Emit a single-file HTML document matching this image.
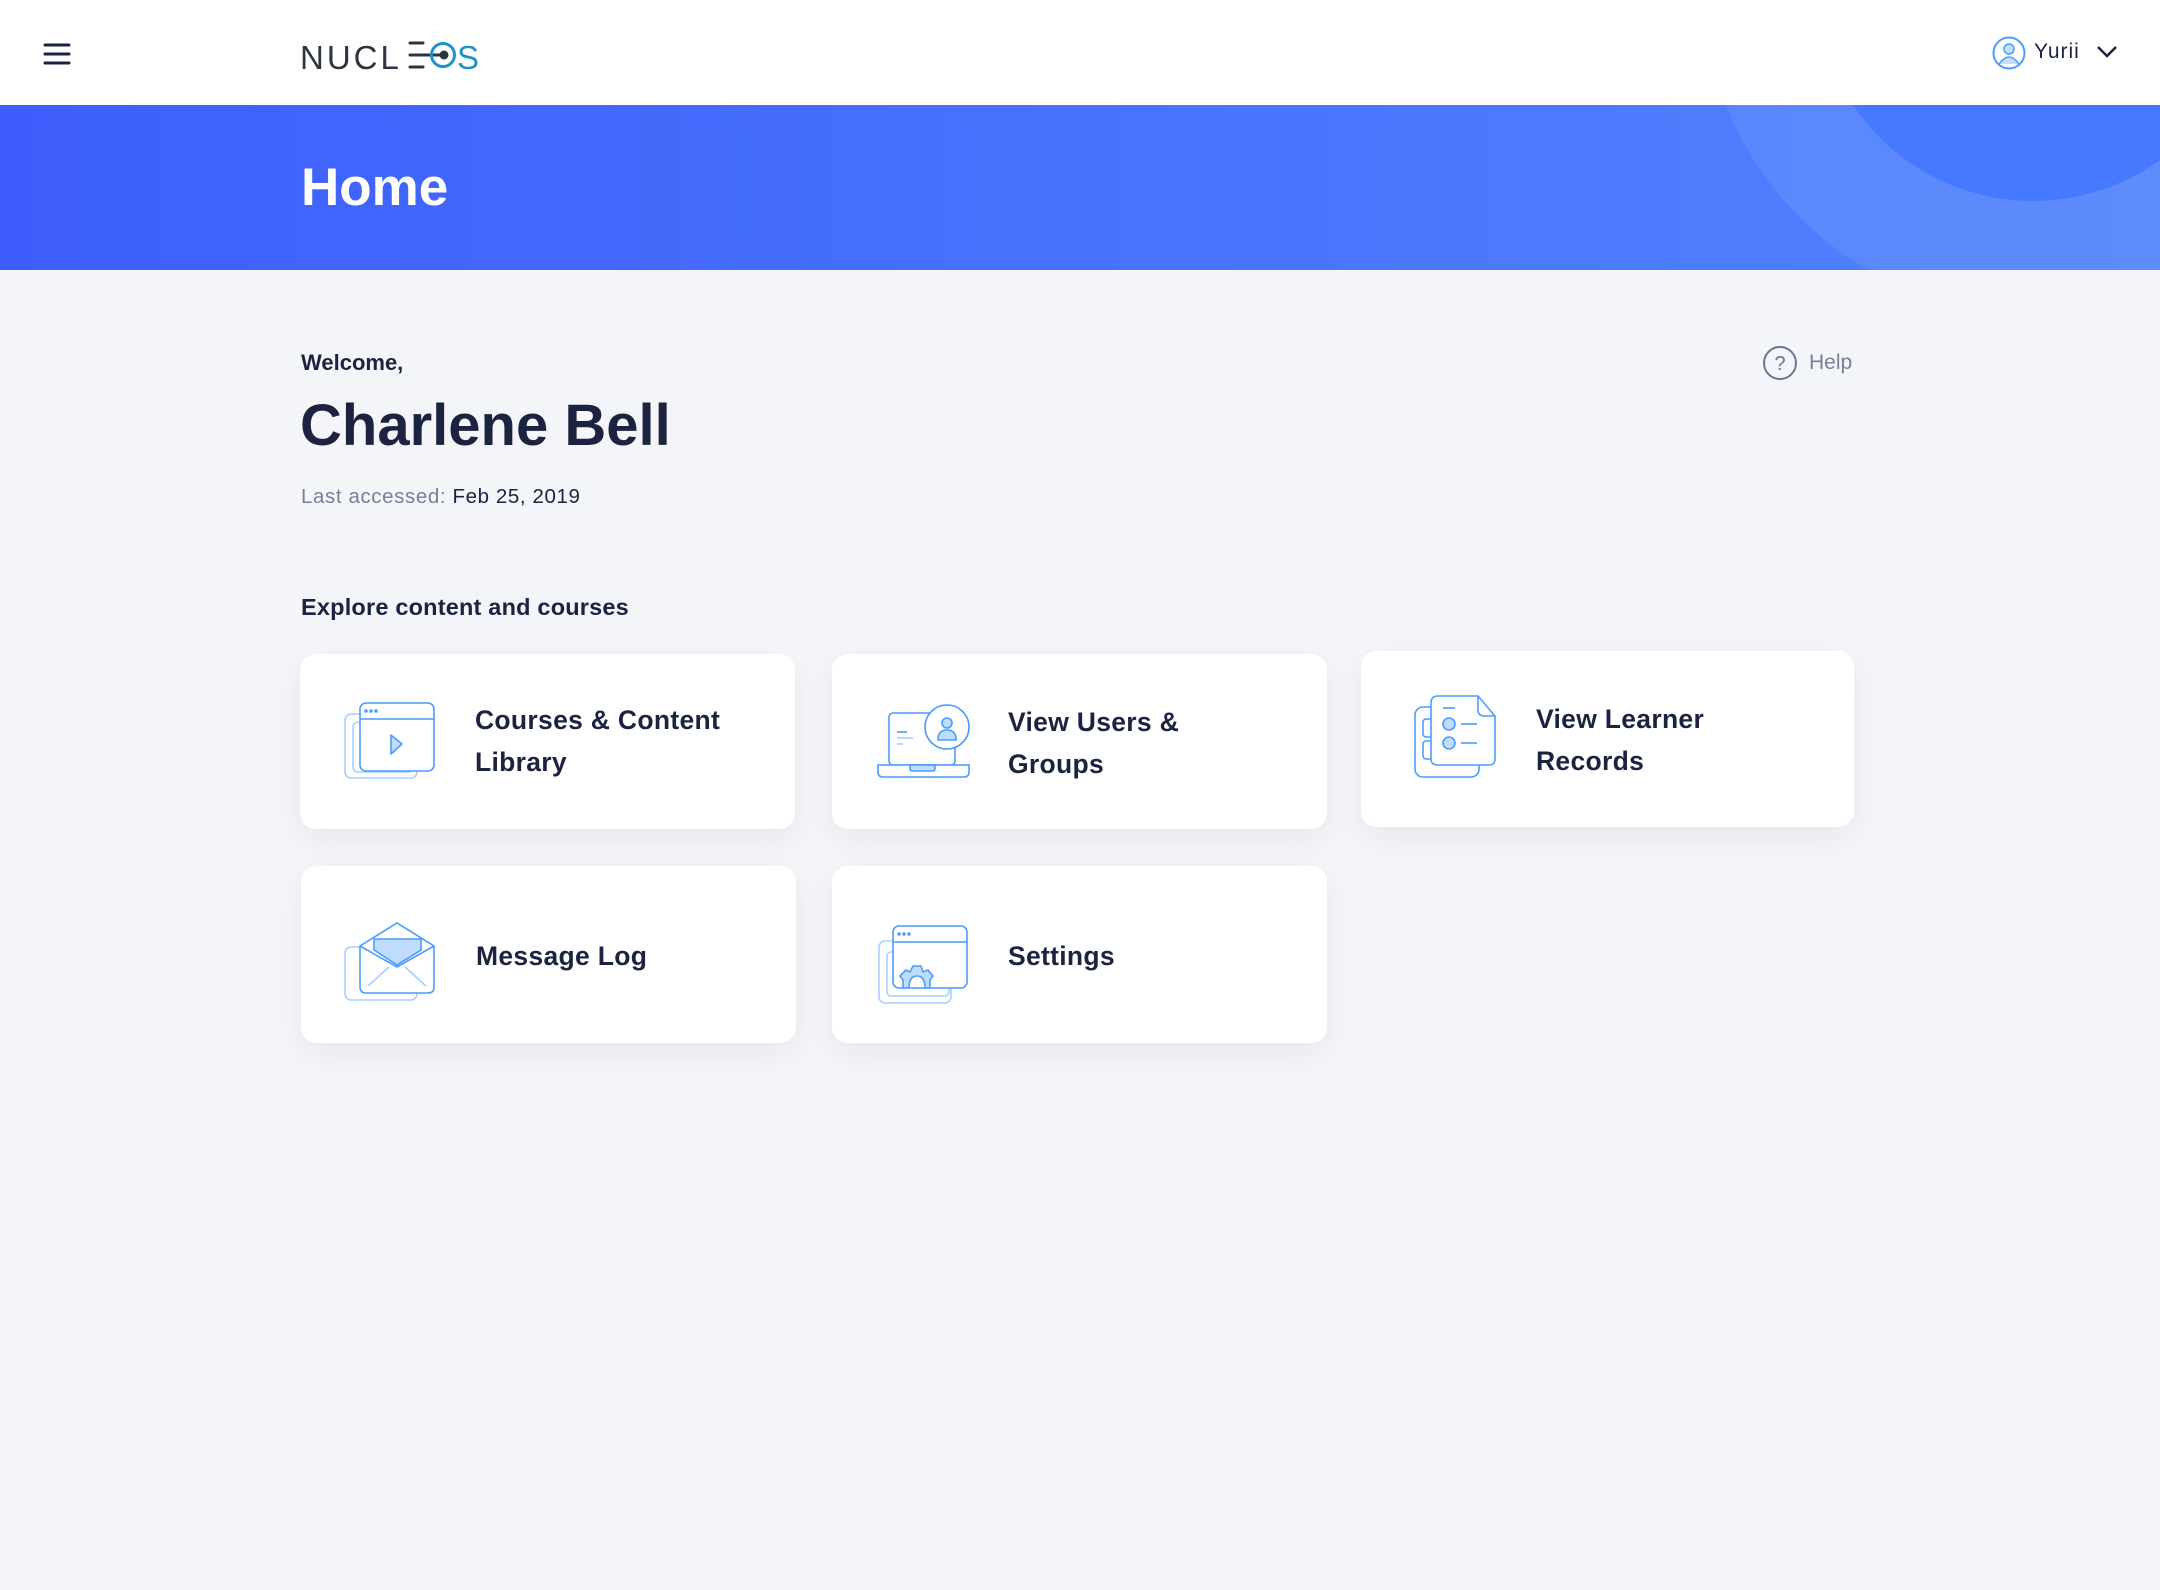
<!DOCTYPE html>
<html><head><meta charset="utf-8"><style>
*{margin:0;padding:0;box-sizing:border-box}
body{width:2160px;height:1590px;background:#f4f5f9;font-family:"Liberation Sans",sans-serif;color:#1b2340;position:relative;overflow:hidden}
.abs{position:absolute}
.hdr{left:0;top:0;width:2160px;height:105px;background:#fff}
.ban{left:0;top:105px;width:2160px;height:165px;background:linear-gradient(90deg,#3d5efc,#4a76fd 60%,#5083fd);overflow:hidden}
.card{background:#fff;border-radius:16px;box-shadow:0 10px 30px rgba(30,40,90,.06)}
.ct{font-size:26.5px;font-weight:bold;line-height:42px;color:#1b2340;letter-spacing:.3px}
</style></head><body>
<div class="abs hdr"></div>
<svg class="abs" style="left:43px;top:42px" width="28" height="24"><g stroke="#1b2340" stroke-width="3" stroke-linecap="round"><line x1="2" y1="3" x2="26" y2="3"/><line x1="2" y1="12" x2="26" y2="12"/><line x1="2" y1="21" x2="26" y2="21"/></g></svg>
<div class="abs" style="left:300px;top:38px;font-size:33px;letter-spacing:3px;color:#2c3442;line-height:40px">NUCL</div>
<svg class="abs" style="left:408px;top:41px" width="76" height="30"><g stroke="#2c3442" stroke-width="3" stroke-linecap="round"><line x1="2" y1="2" x2="15" y2="2"/><line x1="2" y1="14" x2="36" y2="14"/><line x1="2" y1="26" x2="15" y2="26"/></g><circle cx="35" cy="14" r="11.5" fill="none" stroke="#1f93c9" stroke-width="3"/><circle cx="36" cy="14" r="4.5" fill="#2c3442"/></svg>
<div class="abs" style="left:457px;top:38px;font-size:33px;color:#1f93c9;line-height:40px">S</div>
<svg class="abs" style="left:1992px;top:36px" width="34" height="34"><circle cx="17" cy="17" r="15.5" fill="none" stroke="#4a9cff" stroke-width="2"/><circle cx="17" cy="13" r="5" fill="#c4ddff" stroke="#4a9cff" stroke-width="1.5"/><path d="M7 28 Q17 14 27 28" fill="#c4ddff" stroke="#4a9cff" stroke-width="1.5"/></svg>
<div class="abs" style="left:2034px;top:40px;font-size:21px;letter-spacing:1px;color:#1b2340">Yurii</div>
<svg class="abs" style="left:2096px;top:45px" width="22" height="14"><path d="M2 2 L11 11 L20 2" fill="none" stroke="#1b2340" stroke-width="2.5"/></svg>
<div class="abs ban"><div class="abs" style="left:1703px;top:-451px;width:660px;height:660px;border-radius:50%;background:rgba(255,255,255,.08)"></div><div class="abs" style="left:1816px;top:-338px;width:434px;height:434px;border-radius:50%;background:#4779fe"></div></div>
<div class="abs" style="left:301px;top:158px;font-size:53px;font-weight:bold;color:#fff;line-height:60px">Home</div>
<div class="abs" style="left:301px;top:350px;font-size:22px;font-weight:bold">Welcome,</div>
<div class="abs" style="left:300px;top:392px;font-size:58px;font-weight:bold;line-height:68px">Charlene Bell</div>
<div class="abs" style="left:301px;top:485px;font-size:20.5px;color:#77809a;letter-spacing:.6px">Last accessed: <span style="color:#1b2340">Feb 25, 2019</span></div>
<svg class="abs" style="left:1762px;top:345px" width="36" height="36"><circle cx="18" cy="18" r="16" fill="none" stroke="#6c7590" stroke-width="2"/><text x="18" y="25" text-anchor="middle" font-family="Liberation Sans" font-size="20" fill="#6c7590">?</text></svg>
<div class="abs" style="left:1809px;top:351px;font-size:21px;color:#77809a">Help</div>
<div class="abs" style="left:301px;top:594px;font-size:23.5px;font-weight:bold;letter-spacing:.2px">Explore content and courses</div>

<div class="abs card" style="left:300px;top:654px;width:495px;height:175px"></div>
<div class="abs card" style="left:832px;top:654px;width:495px;height:175px"></div>
<div class="abs card" style="left:1361px;top:651px;width:493px;height:176px"></div>
<div class="abs card" style="left:301px;top:866px;width:495px;height:177px"></div>
<div class="abs card" style="left:832px;top:866px;width:495px;height:177px"></div>

<div class="abs ct" style="left:475px;top:699px">Courses &amp; Content<br>Library</div>
<div class="abs ct" style="left:1008px;top:701px">View Users &amp;<br>Groups</div>
<div class="abs ct" style="left:1536px;top:698px">View Learner<br>Records</div>
<div class="abs ct" style="left:476px;top:935px">Message Log</div>
<div class="abs ct" style="left:1008px;top:935px">Settings</div>

<svg class="abs" style="left:344px;top:700px" width="94" height="80" fill="none" stroke-width="1.6"><rect x="1" y="14" width="72" height="64" rx="6" stroke="#a9cfff"/><rect x="9" y="22" width="60" height="50" rx="5" stroke="#a9cfff"/><rect x="16" y="3" width="74" height="68" rx="6" fill="#fff" stroke="#4a9cff"/><line x1="16" y1="19" x2="90" y2="19" stroke="#4a9cff"/><g fill="#4a9cff" stroke="none"><circle cx="22" cy="11" r="1.8"/><circle cx="27" cy="11" r="1.8"/><circle cx="32" cy="11" r="1.8"/></g><path d="M47 35 L58 44 L47 54 Z" fill="#c0dcff" stroke="#4a9cff" stroke-linejoin="round"/></svg>
<svg class="abs" style="left:877px;top:700px" width="94" height="80" fill="none" stroke-width="1.6"><rect x="12" y="13" width="66" height="52" rx="4" stroke="#4a9cff"/><path d="M1 65 H92 V72 Q92 77 87 77 H6 Q1 77 1 72 Z" fill="#fff" stroke="#4a9cff"/><rect x="33" y="65" width="25" height="6" rx="2" fill="#c0dcff" stroke="#4a9cff"/><line x1="20" y1="32" x2="30" y2="32" stroke="#4a9cff"/><line x1="20" y1="38" x2="36" y2="38" stroke="#a9cfff"/><line x1="20" y1="44" x2="26" y2="44" stroke="#a9cfff"/><circle cx="70" cy="27" r="22" fill="#fff" stroke="#4a9cff"/><circle cx="70" cy="23" r="5" fill="#c0dcff" stroke="#4a9cff"/><path d="M61 40 Q61 30 70 30 Q79 30 79 40 Z" fill="#c0dcff" stroke="#4a9cff"/></svg>
<svg class="abs" style="left:1413px;top:695px" width="86" height="84" fill="none" stroke-width="1.6"><rect x="2" y="12" width="64" height="70" rx="8" stroke="#4a9cff"/><rect x="10" y="24" width="10" height="18" rx="3" stroke="#4a9cff"/><rect x="10" y="46" width="10" height="18" rx="3" stroke="#4a9cff"/><path d="M25 1 H65 L82 21 V64 Q82 70 76 70 H25 Q18 70 18 64 V8 Q18 1 25 1 Z" fill="#fff" stroke="#4a9cff"/><path d="M65 1 V15 Q65 21 72 21 H82" stroke="#4a9cff"/><line x1="30" y1="13" x2="42" y2="13" stroke="#4a9cff"/><circle cx="36" cy="29" r="6" fill="#c0dcff" stroke="#4a9cff"/><circle cx="36" cy="48" r="6" fill="#c0dcff" stroke="#4a9cff"/><line x1="48" y1="29" x2="64" y2="29" stroke="#4a9cff"/><line x1="48" y1="48" x2="64" y2="48" stroke="#4a9cff"/></svg>
<svg class="abs" style="left:344px;top:922px" width="94" height="80" fill="none" stroke-width="1.6"><rect x="1" y="25" width="72" height="53" rx="6" stroke="#a9cfff"/><path d="M16 24 L53 1 L90 24 V65 Q90 71 84 71 H22 Q16 71 16 65 Z" fill="#fff" stroke="#4a9cff"/><path d="M30 17 H77 V28 L53 43 L30 28 Z" fill="#c0dcff" stroke="#4a9cff"/><path d="M16 24 L53 45 L90 24" stroke="#4a9cff"/><line x1="24" y1="64" x2="45" y2="45" stroke="#a9cfff"/><line x1="82" y1="64" x2="61" y2="45" stroke="#a9cfff"/></svg>
<svg class="abs" style="left:877px;top:924px" width="94" height="80" fill="none" stroke-width="1.6"><rect x="2" y="17" width="72" height="62" rx="6" stroke="#a9cfff"/><rect x="10" y="28" width="62" height="44" rx="4" stroke="#a9cfff"/><rect x="16" y="2" width="74" height="62" rx="6" fill="#fff" stroke="#4a9cff"/><line x1="16" y1="18" x2="90" y2="18" stroke="#4a9cff"/><g fill="#4a9cff" stroke="none"><circle cx="22" cy="10" r="1.8"/><circle cx="27" cy="10" r="1.8"/><circle cx="32" cy="10" r="1.8"/></g><path d="M26 64 V56 L23 52 L29 46 L33 48 L36 42 H44 L46 48 L51 46 L56 52 L53 56 V64 H48 Q48 52 40 52 Q32 52 32 64 Z" fill="#c0dcff" stroke="#4a9cff" stroke-linejoin="round"/></svg>
</body></html>
